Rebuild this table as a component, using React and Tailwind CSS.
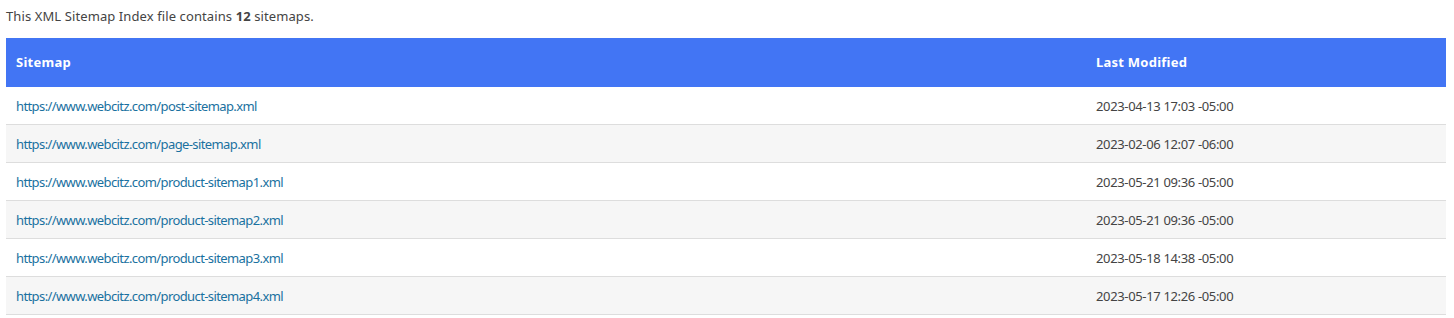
import React from "react";

const rows = [
  ["https://www.webcitz.com/post-sitemap.xml", "2023-04-13 17:03 -05:00"],
  ["https://www.webcitz.com/page-sitemap.xml", "2023-02-06 12:07 -06:00"],
  ["https://www.webcitz.com/product-sitemap1.xml", "2023-05-21 09:36 -05:00"],
  ["https://www.webcitz.com/product-sitemap2.xml", "2023-05-21 09:36 -05:00"],
  ["https://www.webcitz.com/product-sitemap3.xml", "2023-05-18 14:38 -05:00"],
  ["https://www.webcitz.com/product-sitemap4.xml", "2023-05-17 12:26 -05:00"],
];

export default function App() {
  return (
    <div
      className="w-[1454px] h-[318px] overflow-hidden bg-white px-[6px] text-[13px] text-[#444]"
      style={{ fontFamily: '"Noto Sans", "Open Sans", sans-serif' }}
    >
      <p className="pt-[7px] mb-[13px] leading-[18px] tracking-[0.1px]">
        This XML Sitemap Index file contains <strong className="font-bold">12</strong> sitemaps.
      </p>
      <div className="w-[1440px]">
        <div className="grid grid-cols-[1080px_1fr] h-[49px] items-center bg-[#4275f4] text-white font-bold tracking-[0.25px]">
          <div className="px-[10px] pt-[1px]">Sitemap</div>
          <div className="px-[10px] pt-[1px]">Last Modified</div>
        </div>
        {rows.map(([url, date], i) => (
          <div
            key={url}
            className={`grid grid-cols-[1080px_1fr] h-[38px] items-center border-b border-[#ddd] ${
              i % 2 === 1 ? "bg-[#f6f6f6]" : "bg-white"
            }`}
          >
            <div className="px-[10px] pt-[2px]">
              <a href="#" className="text-[#1a71a0] no-underline tracking-[-0.6px]">
                {url}
              </a>
            </div>
            <div className="px-[10px] pt-[2px] tracking-[-0.35px]">{date}</div>
          </div>
        ))}
      </div>
    </div>
  );
}
